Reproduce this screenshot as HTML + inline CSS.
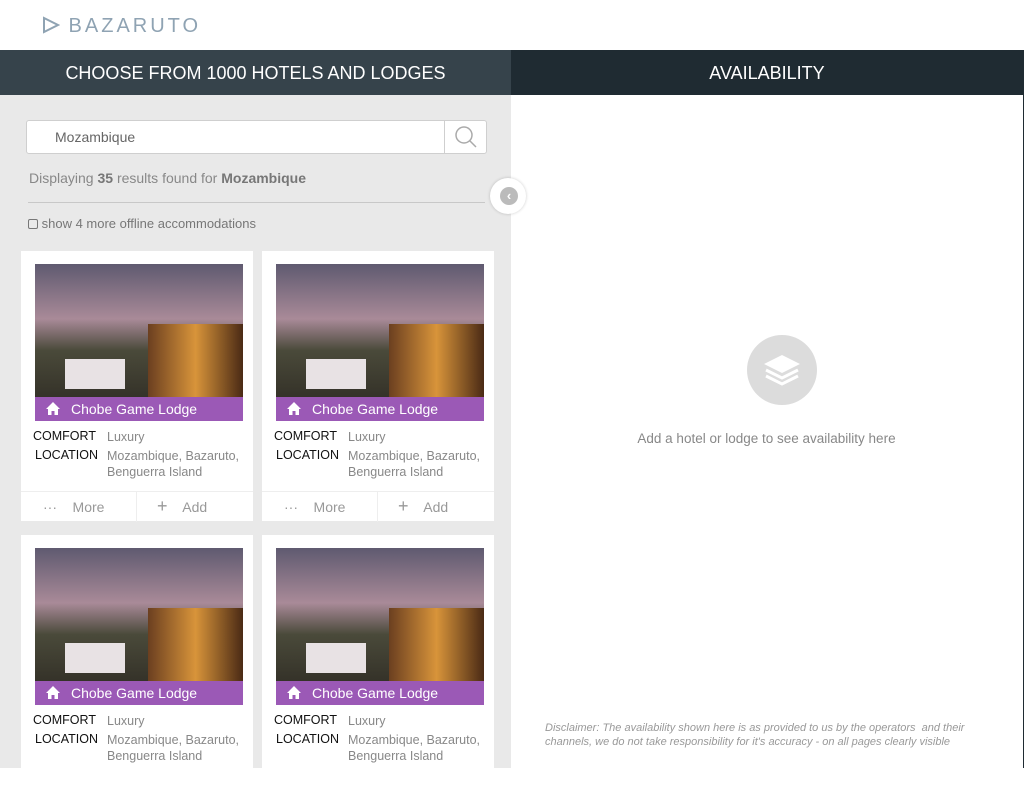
<!DOCTYPE html>
<html><head><meta charset="utf-8"><style>
*{margin:0;padding:0;box-sizing:border-box}
body{width:1024px;height:768px;overflow:hidden;background:#fff;font-family:"Liberation Sans",sans-serif;position:relative}
.abs{position:absolute}
.logo{left:42px;top:15px;font-size:20px;letter-spacing:3px;color:#8fa3b3;font-weight:300}
.hl{left:0;top:50px;width:511px;height:45px;background:#36434b;color:#fff;font-size:18px;text-align:center;line-height:47px}
.hr{left:511px;top:50px;width:512px;height:45px;background:#1f2b32;color:#fff;font-size:18px;text-align:center;line-height:47px}
.left{left:0;top:95px;width:511px;height:673px;background:#e9e9e9;overflow:hidden}
.search{left:26px;top:120px;width:461px;height:34px;background:#fff;border:1px solid #cfcfcf;border-radius:3px}
.search span{position:absolute;left:28px;top:8px;font-size:14px;color:#666}
.search .btn{position:absolute;right:0;top:0;width:42px;height:32px;border-left:1px solid #cfcfcf}
.card{width:232px;height:270px;background:#fff}
.img{position:absolute;left:14px;top:13px;width:208px;height:157px;overflow:hidden;background:linear-gradient(180deg,#5f5a70 0%,#a98a98 35%,#4a4a3a 55%,#2a2620 100%)}
.lbl{position:absolute;left:14px;top:146px;width:208px;height:24px;background:#9b59b6;color:#fff;font-size:14px;line-height:24px;padding-left:36px}
.row{position:absolute;font-size:12.5px;color:#111}
.val{position:absolute;font-size:12.5px;color:#888;line-height:16px}
.foot{position:absolute;left:0;top:240px;width:232px;height:30px;border-top:1px solid #eee;font-size:14px;color:#999}
</style></head><body>
<div class="abs logo"><svg width="18" height="18" viewBox="0 0 18 18" style="vertical-align:-2px"><path d="M2 2L16 9L2 16Z" fill="none" stroke="#8fa3b3" stroke-width="2"/></svg> BAZARUTO</div>
<div class="abs hl">CHOOSE FROM 1000 HOTELS AND LODGES</div>
<div class="abs hr">AVAILABILITY</div>
<div class="abs left"></div>
<div class="abs search"><span>Mozambique</span><div class="btn"><svg width="42" height="32"><circle cx="19" cy="14" r="8" fill="none" stroke="#aaa" stroke-width="1.5"/><path d="M25 20L31 26" stroke="#aaa" stroke-width="1.5"/></svg></div></div>
<div class="abs" style="left:29px;top:170px;font-size:14px;color:#888">Displaying <b style="color:#777">35</b> results found for <b style="color:#777">Mozambique</b></div>
<div class="abs" style="left:28px;top:202px;width:457px;height:1px;background:#c8c8c8"></div>
<div class="abs" style="left:28px;top:216px;font-size:13px;color:#777"><span style="display:inline-block;width:10px;height:10px;border:1px solid #777;border-radius:2px;vertical-align:-1px"></span> show 4 more offline accommodations</div>
<div class="abs" style="left:490px;top:178px;width:36px;height:36px;border-radius:50%;background:#fff;box-shadow:0 0 3px rgba(0,0,0,.2)"><div style="position:absolute;left:10px;top:9px;width:18px;height:18px;border-radius:50%;background:#bbb;color:#fff;font-size:13px;line-height:18px;text-align:center;font-weight:bold">‹</div></div>

<div class="abs card" style="left:21px;top:251px">
<div class="img"><div style="position:absolute;right:0;top:60px;width:95px;height:80px;background:linear-gradient(90deg,#6b3f20,#d8943a,#4a2a15)"></div><div style="position:absolute;left:30px;top:95px;width:60px;height:30px;background:#e8e2e4"></div></div>
<div class="lbl"><svg style="position:absolute;left:10px;top:4px" width="16" height="15"><path d="M8 1L1 8H3V14H6.5V10H9.5V14H13V8H15Z" fill="#fff"/></svg>Chobe Game Lodge</div>
<div class="row" style="left:12px;top:178px">COMFORT</div><div class="val" style="left:86px;top:178px">Luxury</div>
<div class="row" style="left:14px;top:197px">LOCATION</div><div class="val" style="left:86px;top:197px">Mozambique, Bazaruto,<br>Benguerra Island</div>
<div class="foot"><span style="position:absolute;left:22px;top:7px">···&nbsp;&nbsp;&nbsp; More</span><div style="position:absolute;left:115px;top:0;width:1px;height:30px;background:#eee"></div><span style="position:absolute;left:136px;top:4px"><span style="font-size:18px">+</span>&nbsp;&nbsp;&nbsp; Add</span></div>
</div>
<div class="abs card" style="left:262px;top:251px">
<div class="img"><div style="position:absolute;right:0;top:60px;width:95px;height:80px;background:linear-gradient(90deg,#6b3f20,#d8943a,#4a2a15)"></div><div style="position:absolute;left:30px;top:95px;width:60px;height:30px;background:#e8e2e4"></div></div>
<div class="lbl"><svg style="position:absolute;left:10px;top:4px" width="16" height="15"><path d="M8 1L1 8H3V14H6.5V10H9.5V14H13V8H15Z" fill="#fff"/></svg>Chobe Game Lodge</div>
<div class="row" style="left:12px;top:178px">COMFORT</div><div class="val" style="left:86px;top:178px">Luxury</div>
<div class="row" style="left:14px;top:197px">LOCATION</div><div class="val" style="left:86px;top:197px">Mozambique, Bazaruto,<br>Benguerra Island</div>
<div class="foot"><span style="position:absolute;left:22px;top:7px">···&nbsp;&nbsp;&nbsp; More</span><div style="position:absolute;left:115px;top:0;width:1px;height:30px;background:#eee"></div><span style="position:absolute;left:136px;top:4px"><span style="font-size:18px">+</span>&nbsp;&nbsp;&nbsp; Add</span></div>
</div>
<div class="abs card" style="left:21px;top:535px">
<div class="img"><div style="position:absolute;right:0;top:60px;width:95px;height:80px;background:linear-gradient(90deg,#6b3f20,#d8943a,#4a2a15)"></div><div style="position:absolute;left:30px;top:95px;width:60px;height:30px;background:#e8e2e4"></div></div>
<div class="lbl"><svg style="position:absolute;left:10px;top:4px" width="16" height="15"><path d="M8 1L1 8H3V14H6.5V10H9.5V14H13V8H15Z" fill="#fff"/></svg>Chobe Game Lodge</div>
<div class="row" style="left:12px;top:178px">COMFORT</div><div class="val" style="left:86px;top:178px">Luxury</div>
<div class="row" style="left:14px;top:197px">LOCATION</div><div class="val" style="left:86px;top:197px">Mozambique, Bazaruto,<br>Benguerra Island</div>
</div>
<div class="abs card" style="left:262px;top:535px">
<div class="img"><div style="position:absolute;right:0;top:60px;width:95px;height:80px;background:linear-gradient(90deg,#6b3f20,#d8943a,#4a2a15)"></div><div style="position:absolute;left:30px;top:95px;width:60px;height:30px;background:#e8e2e4"></div></div>
<div class="lbl"><svg style="position:absolute;left:10px;top:4px" width="16" height="15"><path d="M8 1L1 8H3V14H6.5V10H9.5V14H13V8H15Z" fill="#fff"/></svg>Chobe Game Lodge</div>
<div class="row" style="left:12px;top:178px">COMFORT</div><div class="val" style="left:86px;top:178px">Luxury</div>
<div class="row" style="left:14px;top:197px">LOCATION</div><div class="val" style="left:86px;top:197px">Mozambique, Bazaruto,<br>Benguerra Island</div>
</div>

<div class="abs" style="left:747px;top:335px;width:70px;height:70px;border-radius:50%;background:#dcdcdc"><svg width="70" height="70"><path d="M35 20L53 29L35 38L17 29Z" fill="#fff"/><path d="M19 35L35 43L51 35M19 41L35 49L51 41" fill="none" stroke="#fff" stroke-width="3"/></svg></div>
<div class="abs" style="left:511px;top:431px;width:541px;text-align:center;font-size:13.5px;color:#888;padding-right:30px">Add a hotel or lodge to see availability here</div>
<div class="abs" style="left:545px;top:721px;width:450px;font-size:11px;font-style:italic;color:#999;line-height:14px">Disclaimer: The availability shown here is as provided to us by the operators&nbsp; and their channels, we do not take responsibility for it's accuracy - on all pages clearly visible</div>
<div class="abs" style="left:1023px;top:50px;width:1px;height:718px;background:#1f2b32"></div>
</body></html>
